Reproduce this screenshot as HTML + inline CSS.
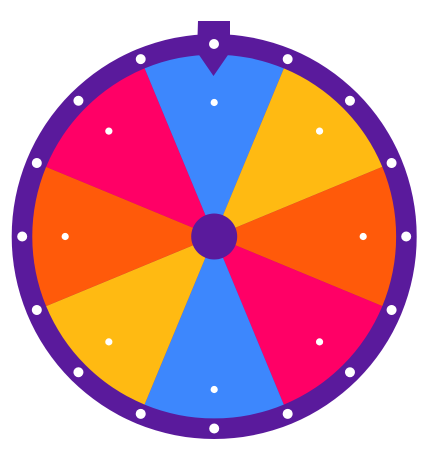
<!DOCTYPE html>
<html><head><style>html,body{margin:0;padding:0;background:#fff;width:437px;height:451px;overflow:hidden}</style></head>
<body>
<svg width="437" height="451" viewBox="0 0 437 451" xmlns="http://www.w3.org/2000/svg">
<g transform="translate(214.2,236.5)">
<circle r="202.5" fill="#5a1a9c"/>
<g id="segs"></g>
<path d="M0 0 L-69.6 -168.1 A182 182 0 0 1 69.6 -168.1 Z" fill="#3d87fd"/>
<path d="M0 0 L-69.6 -168.1 A182 182 0 0 1 69.6 -168.1 Z" fill="#ffba12" transform="rotate(45)"/>
<path d="M0 0 L-69.6 -168.1 A182 182 0 0 1 69.6 -168.1 Z" fill="#ff5a0a" transform="rotate(90)"/>
<path d="M0 0 L-69.6 -168.1 A182 182 0 0 1 69.6 -168.1 Z" fill="#ff0066" transform="rotate(135)"/>
<path d="M0 0 L-69.6 -168.1 A182 182 0 0 1 69.6 -168.1 Z" fill="#3d87fd" transform="rotate(180)"/>
<path d="M0 0 L-69.6 -168.1 A182 182 0 0 1 69.6 -168.1 Z" fill="#ffba12" transform="rotate(225)"/>
<path d="M0 0 L-69.6 -168.1 A182 182 0 0 1 69.6 -168.1 Z" fill="#ff5a0a" transform="rotate(270)"/>
<path d="M0 0 L-69.6 -168.1 A182 182 0 0 1 69.6 -168.1 Z" fill="#ff0066" transform="rotate(315)"/>
<circle r="23" fill="#5a1a9c"/>
<g fill="#fff">
<circle cx="0" cy="-192" r="5"/>
<circle cx="0" cy="-192" r="5" transform="rotate(22.5)"/>
<circle cx="0" cy="-192" r="5" transform="rotate(45)"/>
<circle cx="0" cy="-192" r="5" transform="rotate(67.5)"/>
<circle cx="0" cy="-192" r="5" transform="rotate(90)"/>
<circle cx="0" cy="-192" r="5" transform="rotate(112.5)"/>
<circle cx="0" cy="-192" r="5" transform="rotate(135)"/>
<circle cx="0" cy="-192" r="5" transform="rotate(157.5)"/>
<circle cx="0" cy="-192" r="5" transform="rotate(180)"/>
<circle cx="0" cy="-192" r="5" transform="rotate(202.5)"/>
<circle cx="0" cy="-192" r="5" transform="rotate(225)"/>
<circle cx="0" cy="-192" r="5" transform="rotate(247.5)"/>
<circle cx="0" cy="-192" r="5" transform="rotate(270)"/>
<circle cx="0" cy="-192" r="5" transform="rotate(292.5)"/>
<circle cx="0" cy="-192" r="5" transform="rotate(315)"/>
<circle cx="0" cy="-192" r="5" transform="rotate(337.5)"/>
<circle cx="0" cy="-134" r="3.6"/>
<circle cx="0" cy="-149" r="3.6" transform="rotate(45)"/>
<circle cx="0" cy="-149" r="3.6" transform="rotate(90)"/>
<circle cx="0" cy="-149" r="3.6" transform="rotate(135)"/>
<circle cx="0" cy="-153" r="3.6" transform="rotate(180)"/>
<circle cx="0" cy="-149" r="3.6" transform="rotate(225)"/>
<circle cx="0" cy="-149" r="3.6" transform="rotate(270)"/>
<circle cx="0" cy="-149" r="3.6" transform="rotate(315)"/>
</g>
</g>
<path d="M198 21 L230 21 L230 52 L213.5 76 L197 52 Z" fill="#5a1a9c"/>
<circle cx="214" cy="44" r="5" fill="#fff"/>
</svg>
</body></html>
